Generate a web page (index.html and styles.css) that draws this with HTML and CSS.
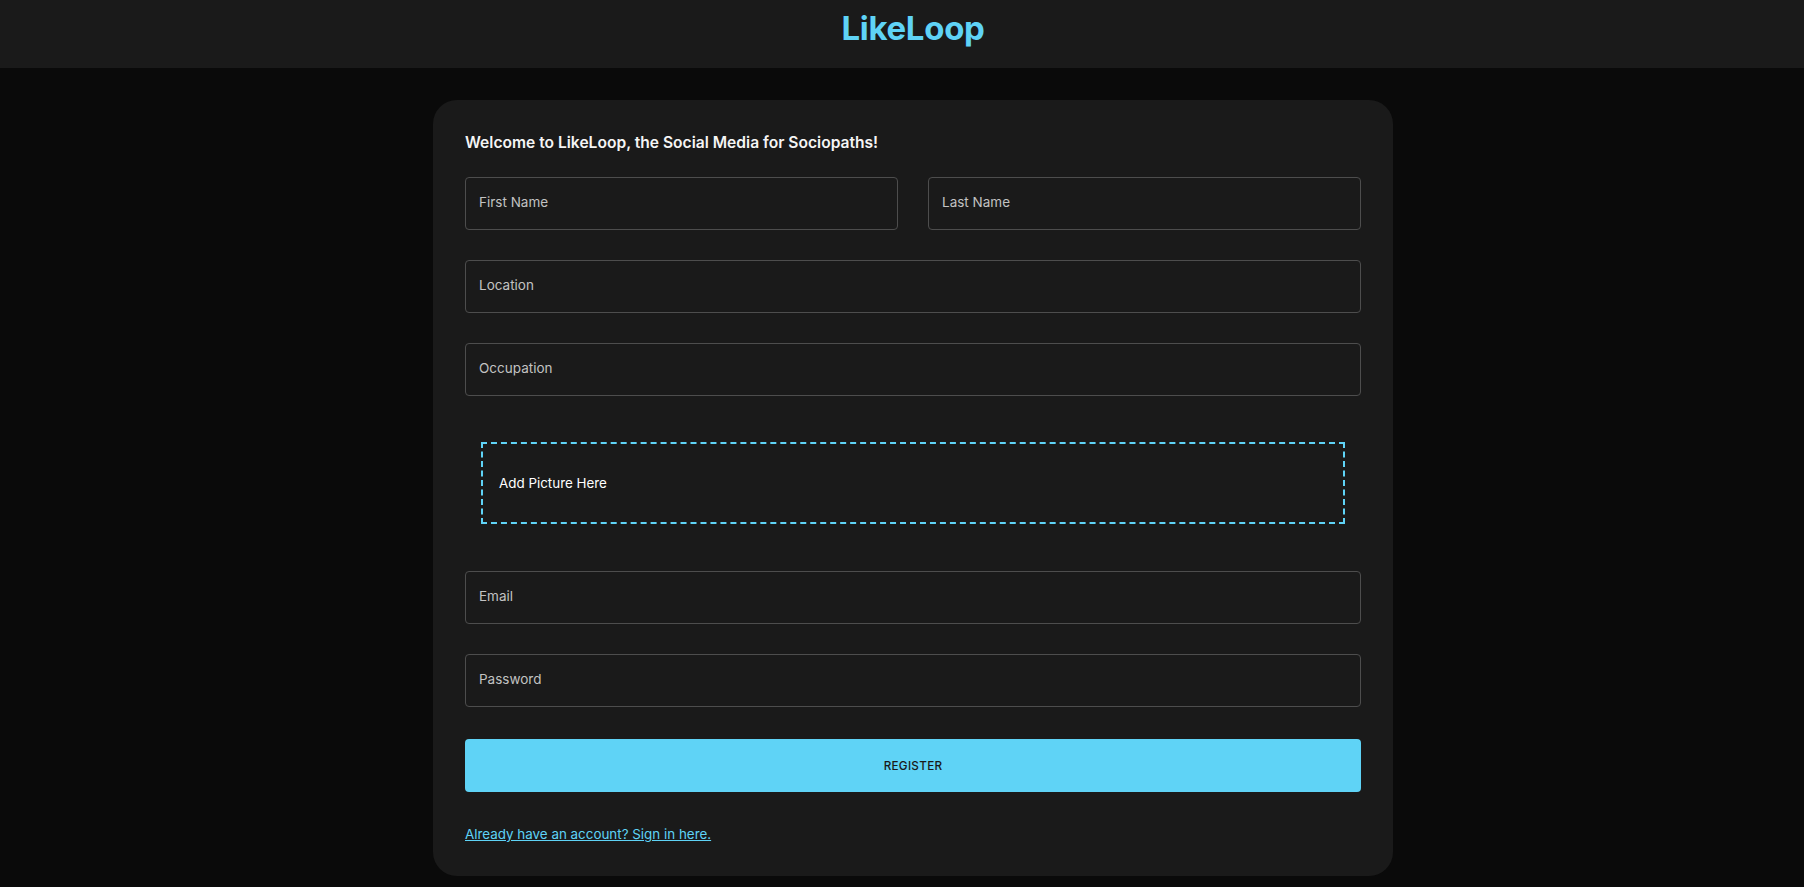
FILE: index.html
```html
<!DOCTYPE html>
<html lang="en">
<head>
<meta charset="utf-8">
<title>LikeLoop</title>
<link rel="stylesheet" href="styles.css">
</head>
<body>
<div class="page">
  <header class="topbar">
    <div class="brand">LikeLoop</div>
  </header>
  <main class="card">
    <h5 class="welcome">Welcome to LikeLoop, the Social Media for Sociopaths!</h5>
    <form class="form-grid">
      <label class="field half"><span>First Name</span></label>
      <label class="field half"><span>Last Name</span></label>
      <label class="field full"><span>Location</span></label>
      <label class="field full"><span>Occupation</span></label>
      <div class="drop-wrap full">
        <div class="dropzone"><p>Add Picture Here</p></div>
      </div>
      <label class="field full"><span>Email</span></label>
      <label class="field full"><span>Password</span></label>
    </form>
    <button class="register" type="button">REGISTER</button>
    <a class="signin" href="#">Already have an account? Sign in here.</a>
  </main>
</div>
</body>
</html>
```
FILE: styles.css
```css
* { box-sizing: border-box; }
html, body { margin: 0; padding: 0; }
body {
  background: #0a0a0a;
  font-family: "Inter", "Noto Sans", sans-serif;
  color: #c2c2c2;
  min-height: 887px;
}
.page {
  padding-left: 22px;
  padding-bottom: 20px;
}
.topbar {
  background: #1a1a1a;
  height: 68px;
  display: flex;
  align-items: flex-start;
  justify-content: center;
  margin-left: -22px;
  padding: 8px 0 0 22px;
}
.brand {
  color: #5fd3f6;
  font-size: 33px;
  line-height: 40px;
  font-weight: 700;
  letter-spacing: -0.3px;
}
.card {
  width: 960px;
  margin: 32px auto 0;
  background: #1a1a1a;
  border-radius: 24px;
  padding: 32px;
}
.welcome {
  margin: 0 0 24px;
  font-size: 15.6px;
  line-height: 21px;
  font-weight: 600;
  color: #f5f5f5;
}
.form-grid {
  display: grid;
  grid-template-columns: repeat(4, 1fr);
  gap: 30px;
}
.half { grid-column: span 2; }
.full { grid-column: span 4; }
.field {
  height: 53px;
  border: 1px solid #4d4d4d;
  border-radius: 4px;
  display: flex;
  align-items: center;
  padding: 0 13px 3px;
  font-size: 13.5px;
  color: #c2c2c2;
}
.drop-wrap {
  border-radius: 5px;
  padding: 16px 16px 17px;
}
.dropzone {
  border: 2px dashed #5fd3f6;
  padding: 0 16px;
  height: 82px;
  display: flex;
  align-items: center;
}
.dropzone p {
  margin: 0;
  font-size: 13.4px;
  color: #ffffff;
}
.register {
  display: block;
  width: 100%;
  height: 53px;
  margin: 32px 0;
  border: none;
  border-radius: 4px;
  background: #5fd3f6;
  color: #1a1a1a;
  font-family: inherit;
  font-size: 11.7px;
  font-weight: 500;
  letter-spacing: 0.3px;
}
.signin {
  display: block;
  line-height: 20px;
  font-size: 13.4px;
  color: #5fd3f6;
  text-decoration: underline;
}
```
